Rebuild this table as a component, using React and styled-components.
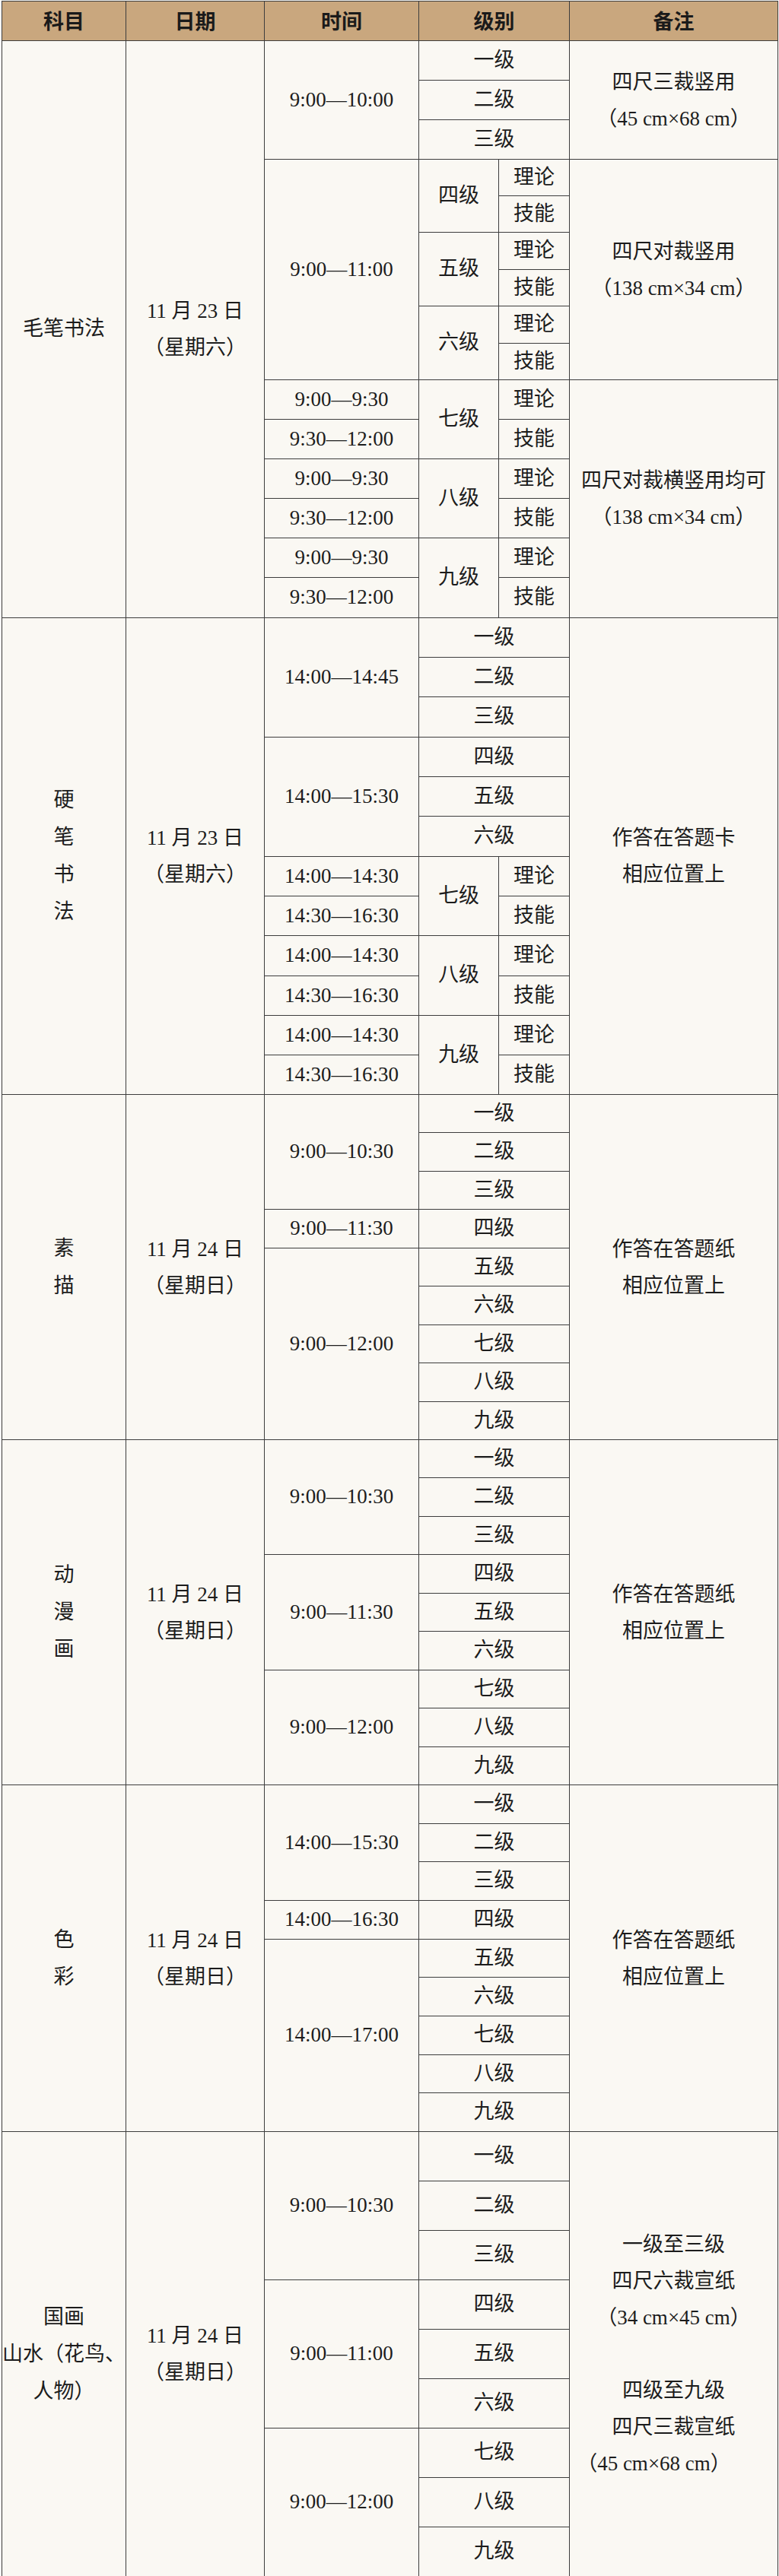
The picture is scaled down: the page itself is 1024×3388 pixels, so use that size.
import React from "react";
import styled, { createGlobalStyle } from "styled-components";

const GlobalStyle = createGlobalStyle`
  html, body {
    margin: 0;
    padding: 0;
    background: #fbf9f5;
  }
  body {
    font-family: "Liberation Serif", "Noto Sans CJK SC", serif;
    color: #1c1c1c;
  }
`;

const Page = styled.div`
  width: 1024px;
  padding: 1px 0 0 2px;
  box-sizing: border-box;
`;

const Table = styled.table`
  width: 1021px;
  border-collapse: collapse;
  table-layout: fixed;
  background: #faf8f3;
`;

const Col = styled.col`
  width: ${(p) => p.$w}px;
`;

const HeadRow = styled.tr`
  height: 52px;
  background: #c9a77e;
`;

const HeadCell = styled.th`
  border: 1.5px solid #3d3d3d;
  padding: 0;
  font-family: "Noto Sans CJK SC", sans-serif;
  font-weight: 700;
  font-size: 27px;
  line-height: 1.2;
  color: #1a1a1a;
  text-align: center;
  vertical-align: middle;
`;

const Row = styled.tr`
  height: ${(p) => p.$h}px;
`;

const Cell = styled.td`
  border: 1.5px solid #3d3d3d;
  padding: 0;
  font-size: 27px;
  line-height: 1.15;
  font-weight: 400;
  text-align: center;
  vertical-align: middle;
  white-space: nowrap;
`;

const Line = styled.span`
  display: block;
  line-height: ${(p) => p.$lh || 48}px;
  min-height: ${(p) => p.$lh || 48}px;
  padding-right: ${(p) => p.$shift || 0}px;
`;

const cell = (lines, rs = 1, cs = 1, extra = {}) => ({
  lines: Array.isArray(lines) ? lines : [lines],
  rs,
  cs,
  ...extra,
});
const G = (t) => cell(t, 1, 2);
const S = (t) => cell(t, 2, 1);
const TH = cell("理论");
const SK = cell("技能");

const sections = [
  {
    subject: ["毛笔书法"],
    date: ["11 月 23 日", "（星期六）"],
    heights: [52, 52, 52, 48, 48, 49, 48, 49, 48, 52, 52, 52, 52, 52, 53],
    rows: [
      [cell("9:00—10:00", 3), G("一级"), cell(["四尺三裁竖用", "（45 cm×68 cm）"], 6 - 3)],
      [G("二级")],
      [G("三级")],
      [cell("9:00—11:00", 6), S("四级"), TH, cell(["四尺对裁竖用", "（138 cm×34 cm）"], 6)],
      [SK],
      [S("五级"), TH],
      [SK],
      [S("六级"), TH],
      [SK],
      [cell("9:00—9:30"), S("七级"), TH, cell(["四尺对裁横竖用均可", "（138 cm×34 cm）"], 6)],
      [cell("9:30—12:00"), SK],
      [cell("9:00—9:30"), S("八级"), TH],
      [cell("9:30—12:00"), SK],
      [cell("9:00—9:30"), S("九级"), TH],
      [cell("9:30—12:00"), SK],
    ],
  },
  {
    subject: ["硬", "笔", "书", "法"],
    date: ["11 月 23 日", "（星期六）"],
    heights: [52, 52, 53, 52, 52, 53, 52, 52, 53, 52, 52, 52],
    rows: [
      [cell("14:00—14:45", 3), G("一级"), cell(["作答在答题卡", "相应位置上"], 12)],
      [G("二级")],
      [G("三级")],
      [cell("14:00—15:30", 3), G("四级")],
      [G("五级")],
      [G("六级")],
      [cell("14:00—14:30"), S("七级"), TH],
      [cell("14:30—16:30"), SK],
      [cell("14:00—14:30"), S("八级"), TH],
      [cell("14:30—16:30"), SK],
      [cell("14:00—14:30"), S("九级"), TH],
      [cell("14:30—16:30"), SK],
    ],
  },
  {
    subject: ["素", "描"],
    date: ["11 月 24 日", "（星期日）"],
    heights: [50, 51, 50, 51, 50, 51, 50, 51, 50],
    rows: [
      [cell("9:00—10:30", 3), G("一级"), cell(["作答在答题纸", "相应位置上"], 9)],
      [G("二级")],
      [G("三级")],
      [cell("9:00—11:30"), G("四级")],
      [cell("9:00—12:00", 5), G("五级")],
      [G("六级")],
      [G("七级")],
      [G("八级")],
      [G("九级")],
    ],
  },
  {
    subject: ["动", "漫", "画"],
    date: ["11 月 24 日", "（星期日）"],
    heights: [50, 51, 50, 51, 50, 51, 50, 51, 50],
    rows: [
      [cell("9:00—10:30", 3), G("一级"), cell(["作答在答题纸", "相应位置上"], 9)],
      [G("二级")],
      [G("三级")],
      [cell("9:00—11:30", 3), G("四级")],
      [G("五级")],
      [G("六级")],
      [cell("9:00—12:00", 3), G("七级")],
      [G("八级")],
      [G("九级")],
    ],
  },
  {
    subject: ["色", "彩"],
    date: ["11 月 24 日", "（星期日）"],
    heights: [51, 50, 51, 51, 50, 51, 51, 50, 51],
    rows: [
      [cell("14:00—15:30", 3), G("一级"), cell(["作答在答题纸", "相应位置上"], 9)],
      [G("二级")],
      [G("三级")],
      [cell("14:00—16:30"), G("四级")],
      [cell("14:00—17:00", 5), G("五级")],
      [G("六级")],
      [G("七级")],
      [G("八级")],
      [G("九级")],
    ],
  },
  {
    subject: ["国画", "山水（花鸟、", "人物）"],
    date: ["11 月 24 日", "（星期日）"],
    heights: [65, 65, 65, 65, 65, 65, 65, 65, 65],
    rows: [
      [
        cell("9:00—10:30", 3),
        G("一级"),
        cell(
          [
            "一级至三级",
            "四尺六裁宣纸",
            "（34 cm×45 cm）",
            "",
            "四级至九级",
            "四尺三裁宣纸",
            { text: "（45 cm×68 cm）", shift: 52 },
          ],
          9
        ),
      ],
      [G("二级")],
      [G("三级")],
      [cell("9:00—11:00", 3), G("四级")],
      [G("五级")],
      [G("六级")],
      [cell("9:00—12:00", 3), G("七级")],
      [G("八级")],
      [G("九级")],
    ],
  },
];

const Content = ({ lines, lh }) => {
  if (lines.length === 1 && typeof lines[0] === "string") return lines[0];
  return lines.map((l, i) =>
    typeof l === "string" ? (
      <Line key={i} $lh={lh}>
        {l}
      </Line>
    ) : (
      <Line key={i} $lh={lh} $shift={l.shift}>
        {l.text}
      </Line>
    )
  );
};

const Section = ({ section }) => {
  const n = section.rows.length;
  return section.rows.map((row, ri) => (
    <Row key={ri} $h={section.heights[ri]}>
      {ri === 0 && (
        <>
          <Cell rowSpan={n}>
            <Content lines={section.subject} lh={49} />
          </Cell>
          <Cell rowSpan={n}>
            <Content lines={section.date} />
          </Cell>
        </>
      )}
      {row.map((c, ci) => (
        <Cell key={ci} rowSpan={c.rs > 1 ? c.rs : undefined} colSpan={c.cs > 1 ? c.cs : undefined}>
          <Content lines={c.lines} />
        </Cell>
      ))}
    </Row>
  ));
};

export default function App() {
  return (
    <Page>
      <GlobalStyle />
      <Table>
        <colgroup>
          <Col $w={163} />
          <Col $w={182} />
          <Col $w={203} />
          <Col $w={105} />
          <Col $w={93} />
          <Col $w={274} />
        </colgroup>
        <thead>
          <HeadRow>
            <HeadCell>科目</HeadCell>
            <HeadCell>日期</HeadCell>
            <HeadCell>时间</HeadCell>
            <HeadCell colSpan={2}>级别</HeadCell>
            <HeadCell>备注</HeadCell>
          </HeadRow>
        </thead>
        <tbody>
          {sections.map((s, i) => (
            <Section key={i} section={s} />
          ))}
        </tbody>
      </Table>
    </Page>
  );
}
